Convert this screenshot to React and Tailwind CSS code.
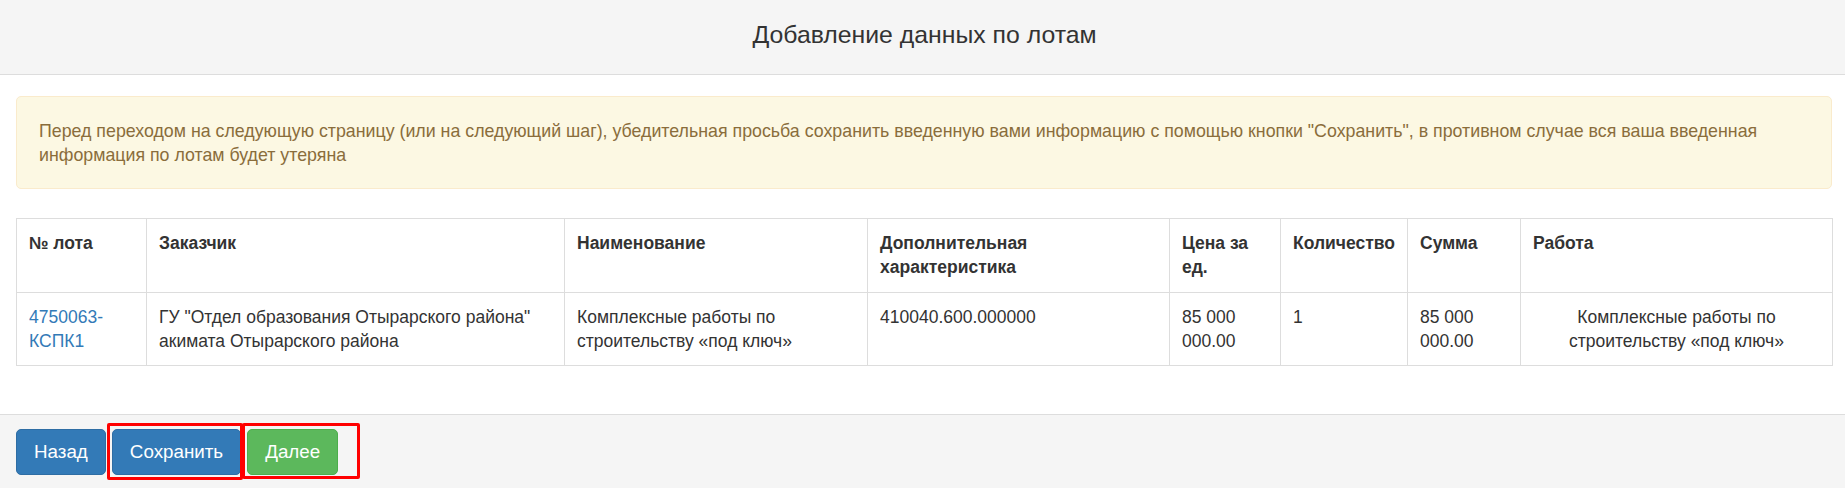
import React from 'react';

const columns = [
  { title: '№ лота', w: 'w-[130px]' },
  { title: 'Заказчик', w: 'w-[418px]' },
  { title: 'Наименование', w: 'w-[303px]' },
  { title: 'Дополнительная характеристика', w: 'w-[302px]' },
  { title: 'Цена за ед.', w: 'w-[111px]' },
  { title: 'Количество', w: 'w-[127px]' },
  { title: 'Сумма', w: 'w-[113px]' },
  { title: 'Работа', w: 'w-[312px]' },
];

export default function App() {
  return (
    <div className="min-h-[488px] bg-white text-[#333] font-['Liberation_Sans',Arial,sans-serif] flex flex-col">
      {/* header */}
      <div className="h-[75px] bg-[#f5f5f5] border-b border-[#ddd] flex items-center justify-center pb-[4px]">
        <h3 className="text-[24.8px] leading-[30px] font-normal text-[#333] pl-[4px]">Добавление данных по лотам</h3>
      </div>

      <div className="pl-[16px] pr-[13px] pt-[21px] pb-[48px]">
        <div className="bg-[#fcf8e3] border border-[#faebcc] rounded-[5px] text-[#8a6d3b] text-[17.8px] leading-[24px] pl-[22px] pr-[20px] pt-[22px] pb-[21px]">
          Перед переходом на следующую страницу (или на следующий шаг), убедительная просьба сохранить введенную вами информацию с помощью кнопки "Сохранить", в противном случае вся ваша введенная информация по лотам будет утеряна
        </div>

        <table className="mt-[29px] w-full table-fixed border-collapse text-[17.5px] leading-[24px]">
          <thead>
            <tr>
              {columns.map((c) => (
                <th key={c.title} className={`${c.w} border border-[#ddd] px-[12px] py-[12px] h-[74px] text-left align-top font-bold text-[#333]`}>
                  {c.title}
                </th>
              ))}
            </tr>
          </thead>
          <tbody>
            <tr>
              <td className="border border-[#ddd] p-[12px] align-top text-[#337ab7] break-words">4750063-КСПК1</td>
              <td className="border border-[#ddd] p-[12px] align-top">ГУ "Отдел образования Отырарского района" акимата Отырарского района</td>
              <td className="border border-[#ddd] p-[12px] align-top">Комплексные работы по строительству «под ключ»</td>
              <td className="border border-[#ddd] p-[12px] align-top">410040.600.000000</td>
              <td className="border border-[#ddd] p-[12px] align-top">85 000 000.00</td>
              <td className="border border-[#ddd] p-[12px] align-top">1</td>
              <td className="border border-[#ddd] p-[12px] align-top">85 000 000.00</td>
              <td className="border border-[#ddd] p-[12px] align-top text-center">Комплексные работы по строительству «под ключ»</td>
            </tr>
          </tbody>
        </table>
      </div>

      {/* footer */}
      <div className="relative flex-1 bg-[#f5f5f5] border-t border-[#ddd] pl-[16px] pt-[14px] pb-[12px] flex gap-[6px] items-start">
        <button className="h-[46px] px-[17px] rounded-[5px] bg-[#337ab7] border border-[#2e6da4] text-white text-[18.8px]">Назад</button>
        <button className="h-[46px] px-[17px] rounded-[5px] bg-[#337ab7] border border-[#2e6da4] text-white text-[18.8px]">Сохранить</button>
        <button className="h-[46px] px-[17px] rounded-[5px] bg-[#5cb85c] border border-[#4cae4c] text-white text-[18.8px]">Далее</button>

        <div className="absolute left-[107px] top-[8px] w-[136px] h-[57px] border-[3px] border-[#ff0000] rounded-[2px] pointer-events-none"></div>
        <div className="absolute left-[242px] top-[8px] w-[118px] h-[56px] border-[3px] border-[#ff0000] rounded-[2px] pointer-events-none"></div>
      </div>
    </div>
  );
}
